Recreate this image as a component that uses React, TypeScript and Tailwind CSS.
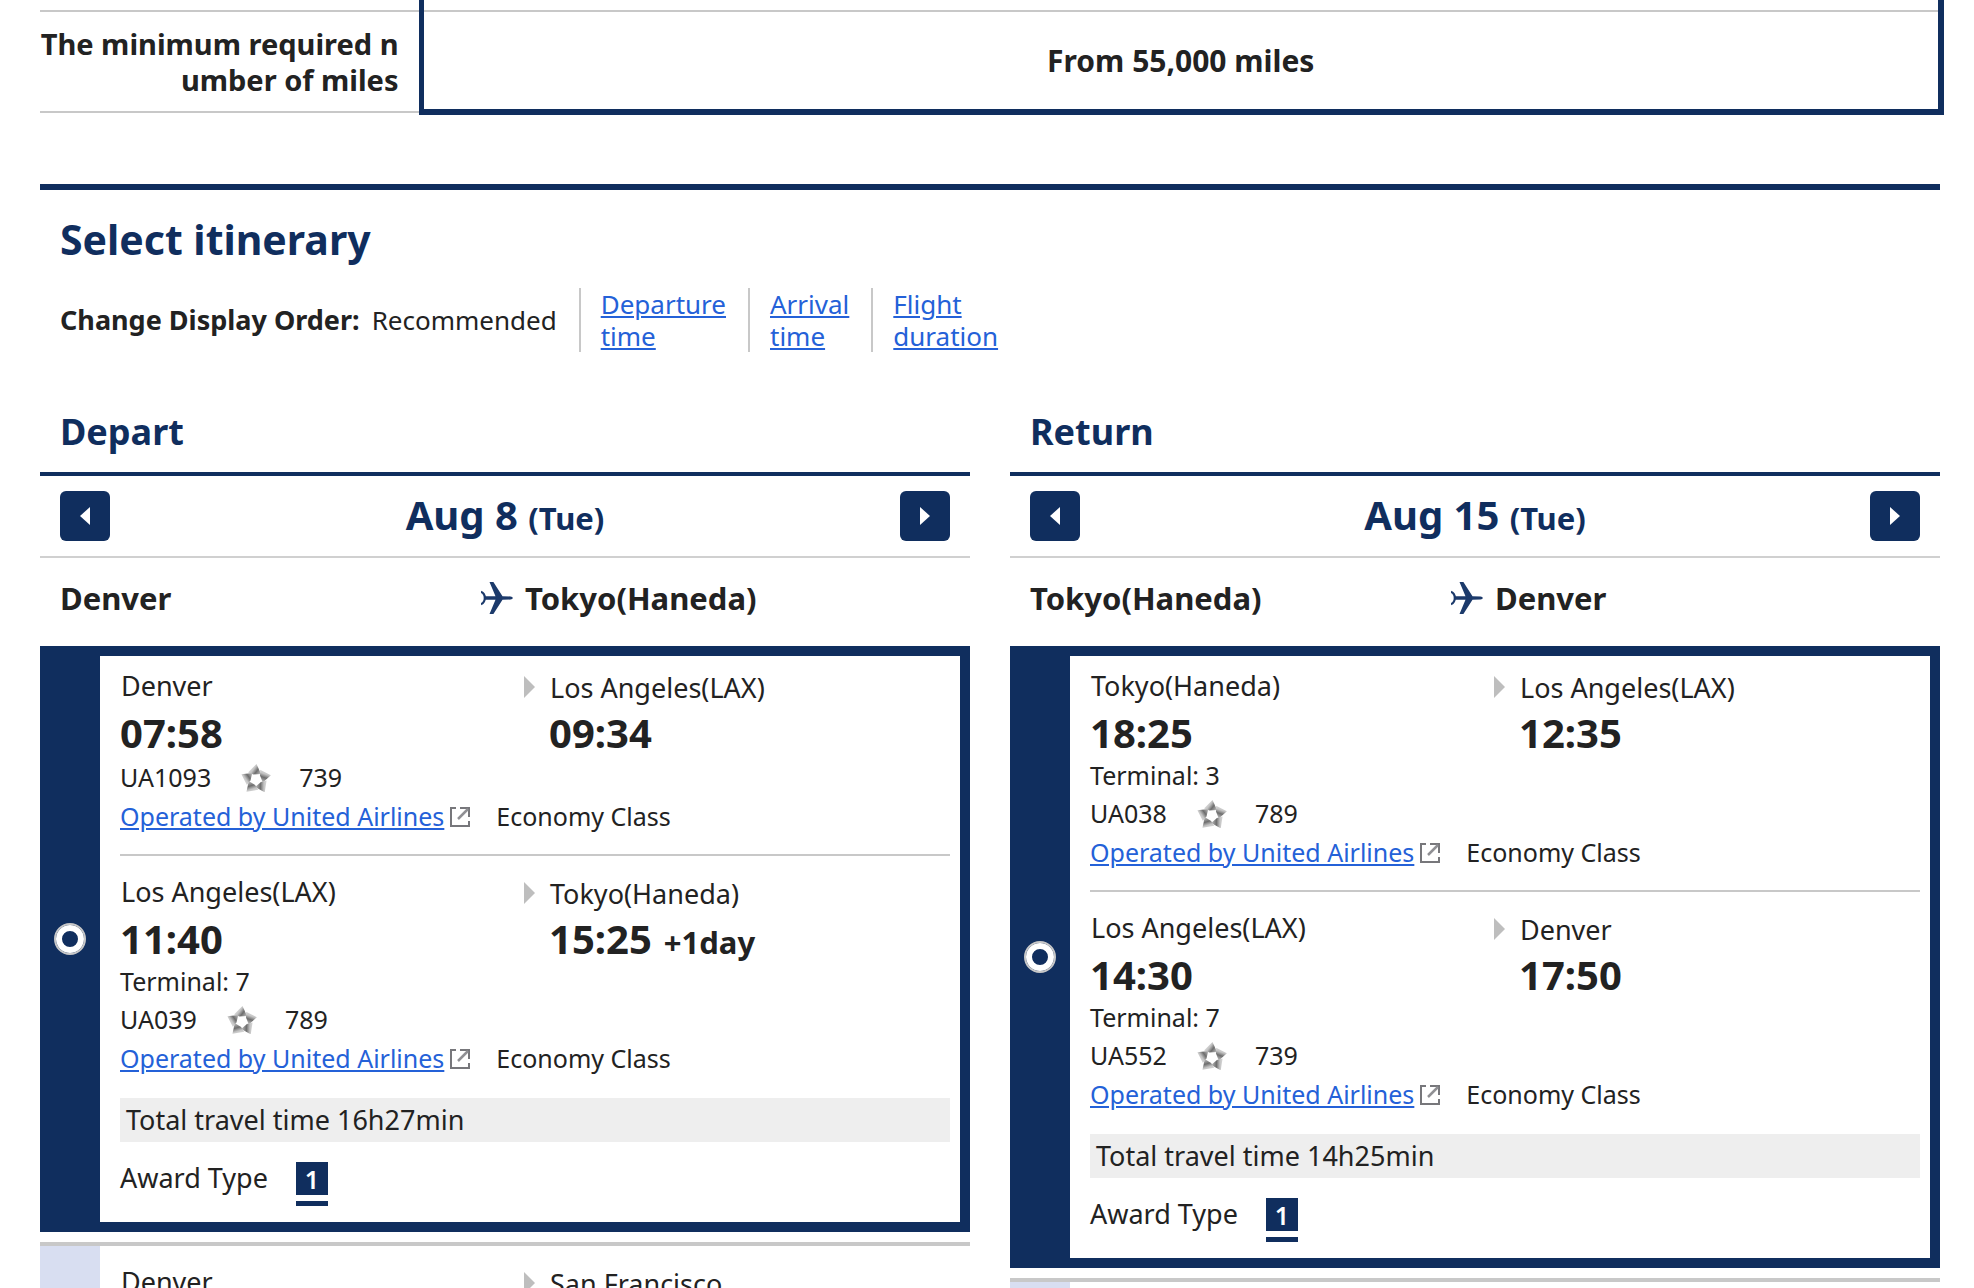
import clsx from "clsx";

// --- Itinerary data ---
type Leg = {
  from: string;
  to: string;
  departs?: string;
  arrives?: string;
  dayShift?: string;
  terminal?: string;
  flight?: string;
  aircraft?: string;
};

type Itinerary = { legs: Leg[]; total?: string; selected?: boolean };

type Direction = {
  id: string;
  title: string;
  date: string;
  weekday: string;
  from: string;
  to: string;
  itineraries: Itinerary[];
};

const directions: Direction[] = [
  {
    id: "depart",
    title: "Depart",
    date: "Aug 8",
    weekday: "(Tue)",
    from: "Denver",
    to: "Tokyo(Haneda)",
    itineraries: [
      {
        selected: true,
        total: "16h27min",
        legs: [
          {
            from: "Denver",
            to: "Los Angeles(LAX)",
            departs: "07:58",
            arrives: "09:34",
            flight: "UA1093",
            aircraft: "739",
          },
          {
            from: "Los Angeles(LAX)",
            to: "Tokyo(Haneda)",
            departs: "11:40",
            arrives: "15:25",
            dayShift: "+1day",
            terminal: "Terminal: 7",
            flight: "UA039",
            aircraft: "789",
          },
        ],
      },
      { legs: [{ from: "Denver", to: "San Francisco" }] },
    ],
  },
  {
    id: "return",
    title: "Return",
    date: "Aug 15",
    weekday: "(Tue)",
    from: "Tokyo(Haneda)",
    to: "Denver",
    itineraries: [
      {
        selected: true,
        total: "14h25min",
        legs: [
          {
            from: "Tokyo(Haneda)",
            to: "Los Angeles(LAX)",
            departs: "18:25",
            arrives: "12:35",
            terminal: "Terminal: 3",
            flight: "UA038",
            aircraft: "789",
          },
          {
            from: "Los Angeles(LAX)",
            to: "Denver",
            departs: "14:30",
            arrives: "17:50",
            terminal: "Terminal: 7",
            flight: "UA552",
            aircraft: "739",
          },
        ],
      },
      { legs: [] },
    ],
  },
];

const sortLinks = [
  ["Departure", "time"],
  ["Arrival", "time"],
  ["Flight", "duration"],
];

// --- Icons ---
const PlaneIcon = () => (
  <svg viewBox="0 0 32 32" className="size-8 shrink-0" fill="#1c3a6b" aria-hidden="true">
    <path d="M8.500 0h3.900L21.500 14.200l8 .2q2.300.3 2.300 1.600t-2.300 1.600l-8 .2L12.400 32H8.500L14.500 17.800H3V14.200H14.500z" />
    <path d="M0 9.800q3.800 1.600 3.800 6.200T0 22.200" fill="none" stroke="#1c3a6b" strokeWidth="2.200" />
  </svg>
);

const StarAllianceIcon = () => (
  <svg viewBox="0 0 30 28" className="h-7 w-[30px] shrink-0" aria-hidden="true">
    <defs>
      <linearGradient id="facet" x1="0" y1="0.2" x2="1" y2="0.8">
        <stop offset="0" stopColor="#f0f0f0" />
        <stop offset="0.45" stopColor="#c4c4c4" />
        <stop offset="0.7" stopColor="#6e6e6e" />
        <stop offset="1" stopColor="#b4b4b4" />
      </linearGradient>
    </defs>
    {[0, 72, 144, 216, 288].map((angle) => (
      <path
        key={angle}
        d="M15.500 0 7 8.500 12.500 10.500 20 10z"
        fill="url(#facet)"
        transform={`rotate(${angle} 15 15.500)`}
      />
    ))}
  </svg>
);

const NewWindowIcon = () => (
  <svg viewBox="0 0 20 20" className="size-5 shrink-0" fill="none" stroke="#77777b" strokeWidth="2" aria-hidden="true">
    <path d="M6 1H1v18h18v-5" />
    <path d="M10 1h9v9" />
    <path d="M8 12l10-10" stroke="#909094" strokeWidth="2.500" />
  </svg>
);

const Caret = ({ flip = false }) => (
  <svg viewBox="0 0 10 18" className={clsx("h-[18px] w-2.5", flip && "rotate-180")} fill="#fff" aria-hidden="true">
    <path d="M0 0l10 9-10 9z" />
  </svg>
);

const AwardBadge = () => (
  <span className="flex w-8 flex-col gap-1.5">
    <span className="flex h-[33px] items-center justify-center bg-[#102e5e] text-[25px] font-semibold text-white">1</span>
    <span className="h-[5px] bg-[#102e5e]" />
  </span>
);

// --- Pieces ---
const FlightLeg = ({ leg, divided }: { leg: Leg; divided: boolean }) => (
  <div className={clsx(divided && "border-t-2 border-[#c8c8c8]")}>
    <div className={clsx("grid grid-cols-[404px_1fr]", divided ? "pt-5" : "pt-3.5")}>
      <div>
        <p className="h-9 pl-px text-[27px] leading-8">{leg.from}</p>
        {leg.departs && <p className="text-[40px] leading-[53px] font-bold">{leg.departs}</p>}
      </div>
      <div className="flex gap-3.5">
        <svg viewBox="0 0 11 22" className="mt-1.5 h-[22px] w-[11px] shrink-0" fill="#bebebe" aria-hidden="true">
          <path d="M0 0l11 11L0 22z" />
        </svg>
        <div>
          <p className="h-9 pl-px text-[27px] leading-9">{leg.to}</p>
          {leg.arrives && (
            <p className="flex items-baseline gap-3 text-[40px] leading-[53px] font-bold">
              {leg.arrives}
              {leg.dayShift && <span className="text-[31px] leading-9">{leg.dayShift}</span>}
            </p>
          )}
        </div>
      </div>
    </div>
    {leg.terminal && <p className="h-9 text-[25px] leading-8">{leg.terminal}</p>}
    {leg.flight && (
      <>
        <div className="flex h-[38px] items-center text-[25px]">
          <span>{leg.flight}</span>
          <span className="ml-[30px] mr-7">
            <StarAllianceIcon />
          </span>
          <span>{leg.aircraft}</span>
        </div>
        <div className="flex h-[39px] items-center text-[25px]">
          <a href="#operator" className="text-[#2461d8] underline">
            Operated by United Airlines
          </a>
          <span className="mr-[26px] ml-1.5">
            <NewWindowIcon />
          </span>
          <span>Economy Class</span>
        </div>
      </>
    )}
  </div>
);

const ItineraryCard = ({ itinerary, group, index }: { itinerary: Itinerary; group: string; index: number }) => {
  const { selected, legs, total } = itinerary;
  return (
    <div
      className={clsx(
        "mb-2.5 flex",
        selected ? "border-y-10 border-r-10 border-[#102e5e]" : "min-h-28 border-t-4 border-[#c8c8c8]",
      )}
    >
      <label className={clsx("flex w-[60px] shrink-0 items-center justify-center", selected ? "bg-[#102e5e]" : "bg-[#d8def1]")}>
        {selected && (
          <input
            type="radio"
            name={group}
            defaultChecked
            aria-label={`Itinerary ${index + 1}`}
            className="size-8 appearance-none rounded-full border-2 border-[#c8c8c8] bg-[#102e5e] shadow-[inset_0_0_0_6px_#fff]"
          />
        )}
      </label>
      <div className={clsx("min-w-0 flex-1 pl-5", selected ? "pr-2.5" : "pt-1.5 pr-5")}>
        {legs.map((leg, i) => (
          <div key={leg.from} className={clsx(i < legs.length - 1 && "pb-[18px]")}>
            <FlightLeg leg={leg} divided={i > 0} />
          </div>
        ))}
        {total && (
          <>
            <p className="mt-5 h-11 bg-[#eee] px-1.5 text-[27px] leading-11">Total travel time {total}</p>
            <div className="flex gap-7 pt-5 pb-4 text-[27px] leading-8">
              <span>Award Type</span>
              <AwardBadge />
            </div>
          </>
        )}
      </div>
    </div>
  );
};

const DayButton = ({ label, prev = false }: { label: string; prev?: boolean }) => (
  <button type="button" aria-label={label} className="flex size-[50px] items-center justify-center rounded-md bg-[#102e5e]">
    <Caret flip={prev} />
  </button>
);

const DirectionColumn = ({ direction }: { direction: Direction }) => (
  <section>
    <h2 className="border-b-4 border-[#102e5e] px-5 pb-4 text-4xl leading-12 font-bold text-[#102e5e]">{direction.title}</h2>
    <div className="flex h-[82px] items-center justify-between border-b-2 border-[#d0d0d0] px-5 text-[#102e5e]">
      <DayButton prev label="Previous day" />
      <p className="text-[40px] leading-12 font-bold">
        {direction.date} <span className="text-[31px]">{direction.weekday}</span>
      </p>
      <DayButton label="Next day" />
    </div>
    <div className="grid h-22 grid-cols-[421px_1fr] items-center px-5 pb-2 text-[31px] font-bold">
      <span>{direction.from}</span>
      <span className="flex items-center gap-3">
        <PlaneIcon />
        {direction.to}
      </span>
    </div>
    {direction.itineraries.map((itinerary, i) => (
      <ItineraryCard key={i} itinerary={itinerary} group={direction.id} index={i} />
    ))}
  </section>
);

export default function App() {
  return (
    <main className="h-screen overflow-hidden bg-white pr-[34px] pl-10 font-['Noto_Sans',sans-serif] text-[#222]">
      {/* Last row of the mileage table, a little wider than the content below */}
      <table className="w-[calc(100%+4px)] border-collapse text-[29px] leading-9 font-bold">
        <tbody>
          <tr className="h-[11px]">
            <td className="border-b-2 border-[#c8c8c8]" />
            <td className="border-r-6 border-b-2 border-l-5 border-x-[#102e5e] border-b-[#c8c8c8]" />
          </tr>
          <tr className="h-[101px]">
            <th scope="row" className="w-[381px] border-b-2 border-[#c8c8c8] pr-5 text-right font-bold whitespace-nowrap">
              The minimum required n
              <br />
              umber of miles
            </th>
            <td className="border-r-6 border-b-6 border-l-5 border-[#102e5e] text-center text-[30px]">From 55,000 miles</td>
          </tr>
        </tbody>
      </table>

      <div className="mt-[69px] border-t-6 border-[#102e5e]">
        <h1 className="px-5 pt-[19px] text-[41px] leading-15 font-bold text-[#102e5e]">Select itinerary</h1>
        <div className="mt-[19px] flex items-center pl-5 text-[26px] leading-8">
          <p className="flex items-baseline gap-3 pr-[22px]">
            <b className="text-[27px]">Change Display Order:</b>
            Recommended
          </p>
          {sortLinks.map(([first, second]) => (
            <a key={first} href="#sort" className="border-l-2 border-[#c8c8c8] pr-[22px] pl-5 text-[#2461d8] underline">
              {first}
              <br />
              {second}
            </a>
          ))}
        </div>
        <div className="mt-14 grid grid-cols-2 gap-10">
          {directions.map((direction) => (
            <DirectionColumn key={direction.id} direction={direction} />
          ))}
        </div>
      </div>
    </main>
  );
}
